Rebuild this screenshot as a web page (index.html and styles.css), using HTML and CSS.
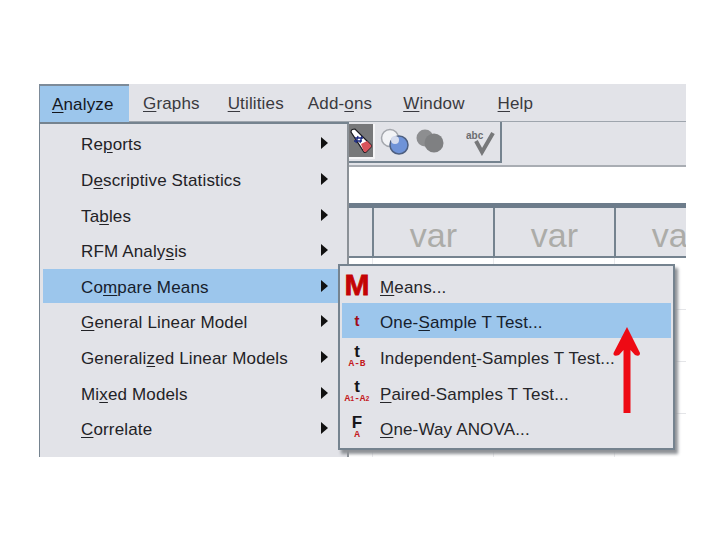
FILE: index.html
```html
<!DOCTYPE html>
<html lang="en">
<head>
<meta charset="utf-8">
<title>Analyze menu</title>
<link rel="stylesheet" href="styles.css">
</head>
<body>
<div class="window">
  <nav class="menubar">
    <span class="top active"><u>A</u>nalyze</span>
    <span class="top graphs"><u>G</u>raphs</span>
    <span class="top utilities"><u>U</u>tilities</span>
    <span class="top addons">Add-<u>o</u>ns</span>
    <span class="top win"><u>W</u>indow</span>
    <span class="top help"><u>H</u>elp</span>
  </nav>
  <div class="toolbar">
    <div class="toolgroup">
      <span class="tool pressed">
        <svg width="25" height="29" viewBox="0 0 25 29"><path d="M3 6 Q3 3 7 3 L23 19 Q24 20 23 21 L18 26 Q17 27 16 26 Z" fill="#fff" stroke="#1a1a1f" stroke-width="1.2"/><path d="M15.500 25 L13 18 L19 15 L23 19 Q24 20 23 21 L18 26 Q17 27 15.500 25 Z" fill="#d9535b"/><path d="M10 10 L8 17 M14 10 L12 17 M7 12 H15 M6 15 H14" stroke="#1c2a80" stroke-width="1.3" fill="none"/></svg>
      </span>
      <svg class="tool-svg" width="30" height="28" viewBox="0 0 30 28"><circle cx="10" cy="10" r="8.500" fill="#f2f3f6" stroke="#a4a7ad" stroke-width="1.500"/><circle cx="19" cy="17" r="9" fill="#6f93d8" stroke="#4d5f80" stroke-width="1.500"/><circle cx="15" cy="12" r="4" fill="#d5dcee"/></svg>
      <svg class="tool-svg" width="30" height="28" viewBox="0 0 30 28"><circle cx="10" cy="10" r="8.500" fill="#8d8e90"/><circle cx="19" cy="15" r="9.500" fill="#7f8082"/></svg>
      <svg class="tool-svg abc" width="30" height="28" viewBox="0 0 30 28"><text x="0" y="11" class="abc-text">abc</text><path d="M10 13 L16 24 L27 5" fill="none" stroke="#77787a" stroke-width="4"/></svg>
    </div>
  </div>
  <div class="inputband"></div>
  <div class="sheet">
    <div class="headrow">
      <div class="corner"></div>
      <div class="varcell">var</div>
      <div class="varcell">var</div>
      <div class="varcell">var</div>
    </div>
    <div class="gridrow"></div>
    <div class="gridrow"></div>
    <div class="gridrow"></div>
    <div class="gridrow"></div>
  </div>

  <div class="menu mainmenu">
    <div class="item"><span>Re<u>p</u>orts</span><i class="caret"></i></div>
    <div class="item"><span>D<u>e</u>scriptive Statistics</span><i class="caret"></i></div>
    <div class="item"><span>Ta<u>b</u>les</span><i class="caret"></i></div>
    <div class="item"><span>RFM Analy<u>s</u>is</span><i class="caret"></i></div>
    <div class="item selected"><span>Co<u>m</u>pare Means</span><i class="caret"></i></div>
    <div class="item"><span><u>G</u>eneral Linear Model</span><i class="caret"></i></div>
    <div class="item"><span>Generali<u>z</u>ed Linear Models</span><i class="caret"></i></div>
    <div class="item"><span>Mi<u>x</u>ed Models</span><i class="caret"></i></div>
    <div class="item"><span><u>C</u>orrelate</span><i class="caret"></i></div>
  </div>

  <div class="menu submenu">
    <div class="subitem"><span class="ico"><b class="big-m">M</b></span><span><u>M</u>eans...</span></div>
    <div class="subitem selected"><span class="ico"><b class="small-t">t</b></span><span>One-<u>S</u>ample T Test...</span></div>
    <div class="subitem"><span class="ico"><b class="stat">t</b><em class="sub">A-B</em></span><span>Independen<u>t</u>-Samples T Test...</span></div>
    <div class="subitem"><span class="ico"><b class="stat">t</b><em class="sub">A<small>1</small>-A<small>2</small></em></span><span><u>P</u>aired-Samples T Test...</span></div>
    <div class="subitem"><span class="ico"><b class="stat">F</b><em class="sub">A</em></span><span><u>O</u>ne-Way ANOVA...</span></div>
  </div>

  <svg class="arrow" width="30" height="88" viewBox="0 0 30 88"><path d="M15 1 L28 27 Q28 31 23 29 L18.500 24 V87 H11.500 V24 L7 29 Q1 31 1.500 27 Z" fill="#ee0a14"/></svg>
</div>
</body>
</html>
```
FILE: styles.css
```css
* { box-sizing: border-box; }
html, body { margin: 0; background: #fff; }
body { padding: 84px 34px 83px 39px; height: 540px; overflow: hidden; font-family: "Liberation Sans", Arial, sans-serif; }
.window { position: relative; width: 647px; height: 373px; overflow: hidden; background: #fff; display: flex; flex-direction: column; color: #1c1c1e; font-size: 17px; letter-spacing: 0.15px; }
u { text-underline-offset: 2px; text-decoration-thickness: 1px; }

.menubar { height: 38px; flex: none; display: flex; align-items: center; background: #e2e3e8; position: relative; border-bottom: 1px solid #9ea5ad; }
.top { display: flex; align-items: center; height: 100%; padding-top: 2px; color: #3a3a40; }
.top.active { width: 90px; padding-left: 12px; height: 38px; background: #9cc6ec; border-top: 2px solid #7d8b99; border-left: 1px solid #7d8b99; color: #14161c; margin-bottom: -1px; }
.graphs { margin-left: 14px; }
.utilities { margin-left: 28px; }
.addons { margin-left: 24px; }
.win { margin-left: 31px; }
.help { margin-left: 33px; }

.toolbar { height: 45px; flex: none; background: #e2e3e8; border-bottom: 2px solid #a9adb3; display: flex; padding-left: 308px; }
.toolgroup { width: 155px; height: 41px; display: flex; align-items: center; border-right: 2px solid #75838f; border-bottom: 2px solid #75838f; }
.tool { width: 28px; height: 35px; display: flex; align-items: center; justify-content: center; background: #77787a; border: 2px solid #f5f5f7; border-top: none; border-left: none; }
.tool-svg { margin-left: 5px; flex: none; }
.abc { margin-left: 21px; }
.abc-text { font-family: "Liberation Sans", Arial, sans-serif; font-size: 10px; font-weight: 700; fill: #6c6d70; letter-spacing: 0; }

.inputband { height: 36px; flex: none; background: #fff; }
.sheet { flex: 1; background: #fff; border-top: 5px solid #6d7c8b; display: flex; flex-direction: column; }
.headrow { height: 50px; flex: none; display: flex; background: #e2e3e8; border-bottom: 2px solid #75838f; }
.corner { width: 333px; flex: none; }
.varcell { width: 121px; flex: none; border-left: 2px solid #75838f; color: #acaca8; font-size: 34px; display: flex; align-items: center; justify-content: center; padding-top: 7px; overflow: hidden; }
.gridrow { height: 52px; flex: none; border-bottom: 1px solid #e4e5e8; background: linear-gradient(#e8e9ec, #e8e9ec) 333px 0 / 1px 100% no-repeat, linear-gradient(#e8e9ec, #e8e9ec) 454px 0 / 1px 100% no-repeat, linear-gradient(#e8e9ec, #e8e9ec) 575px 0 / 1px 100% no-repeat; }

.menu { position: absolute; background: #e2e3e8; border: 2px solid #75838f; }
.mainmenu { left: 0; top: 38px; width: 310px; height: 340px; padding: 2.600px 0 0 3px; border-left-width: 1px; border-right: none; box-shadow: inset -2px 0 0 #8b9197; display: flex; flex-direction: column; }
.item { height: 35.600px; flex: none; width: 295px; display: flex; align-items: center; justify-content: space-between; padding: 4px 10px 0 38px; border-bottom: 2px solid transparent; background-clip: padding-box; color: #222226; }
.item.selected { background-color: #9cc6ec; color: #16202c; }
.caret { width: 0; height: 0; border-left: 7px solid #111; border-top: 6px solid transparent; border-bottom: 6px solid transparent; margin-top: -4px; }

.submenu { left: 299px; top: 180px; width: 337px; height: 186px; padding: 1px 2px 0 2px; box-shadow: 3px 4px 3px #8f9297; display: flex; flex-direction: column; }
.subitem { height: 35.600px; flex: none; display: flex; align-items: center; padding-top: 6px; color: #26262a; }
.subitem.selected { background: #9cc6ec; color: #16202c; }
.ico { width: 38px; height: 36px; flex: none; margin-top: -6px; padding-right: 8px; display: flex; flex-direction: column; align-items: center; justify-content: center; line-height: 1; letter-spacing: 0; }
.big-m { font-size: 30px; color: #c40404; -webkit-text-stroke: 0.8px #c40404; }
.small-t { font-size: 15px; color: #a00b18; }
.stat { font-size: 17px; color: #15151a; line-height: 15px; }
.sub { font-size: 9.500px; font-style: normal; font-weight: 700; color: #c41a22; line-height: 9px; font-family: "Liberation Mono", monospace; white-space: nowrap; }
.sub small { font-size: 6.500px; }

.arrow { position: absolute; left: 573px; top: 242px; }
```
